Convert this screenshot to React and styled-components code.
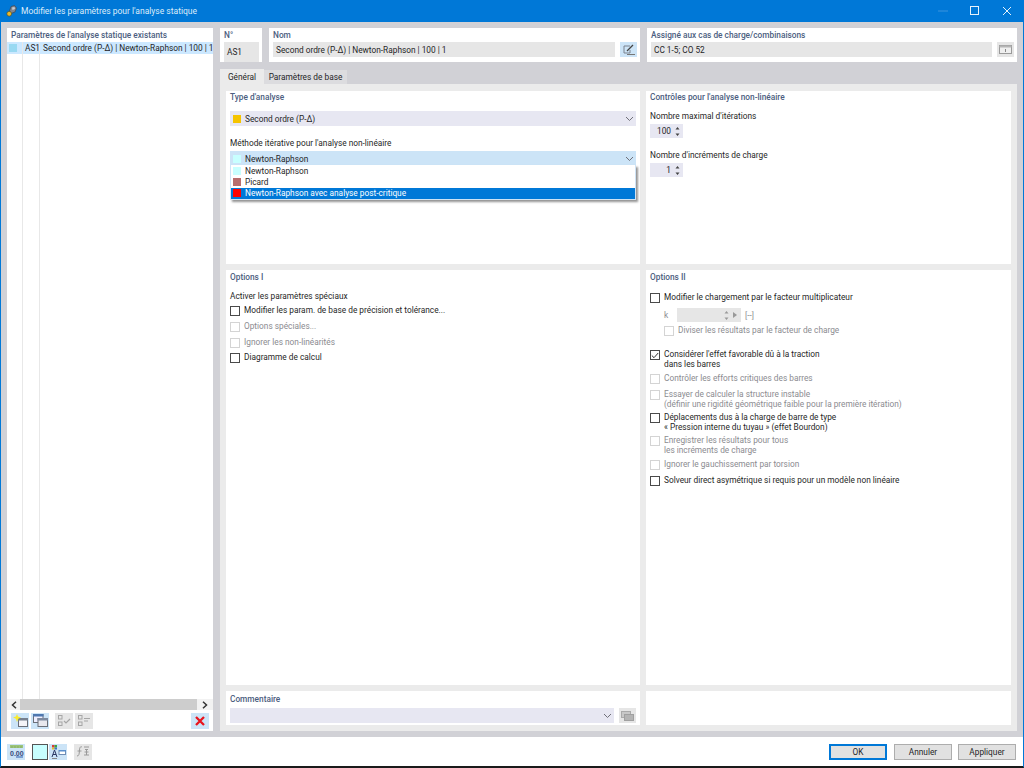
import React from "react";
import styled, { createGlobalStyle } from "styled-components";

const GlobalStyle = createGlobalStyle`
  html, body { margin: 0; padding: 0; background: #fff; }
  body { font-family: Roboto, "Open Sans", "Liberation Sans", sans-serif; font-size: 8.3px; color: #1f1f27; }
  * { box-sizing: border-box; }
`;

const Dialog = styled.div`
  width: 1024px;
  height: 768px;
  display: flex;
  flex-direction: column;
  border-left: 1px solid #0078d7;
  border-right: 1px solid #0078d7;
  border-bottom: 2px solid #1a1a1a;
  background: #fff;
  overflow: hidden;
`;
const TitleBar = styled.div`
  height: 22px;
  flex: none;
  margin: 0 -1px;
  background: #0078d7;
  color: #dcecf9;
  display: flex;
  align-items: center;
  padding-left: 6px;
  font-size: 8.5px;
  gap: 4px;
`;
const TitleText = styled.span`
  flex: 1;
`;
const WinControls = styled.div`
  display: flex;
  padding-right: 1px;
`;
const WinBtn = styled.div`
  width: 32px;
  height: 22px;
  display: flex;
  align-items: center;
  justify-content: center;
`;
const Body = styled.div`
  height: 715px;
  flex: none;
  background: #d1d1d6;
  padding: 6px;
  display: grid;
  grid-template-columns: 206px 797px;
  column-gap: 7px;
`;
const LeftPanel = styled.div`
  background: #fff;
  display: flex;
  flex-direction: column;
`;
const PanelTitle = styled.div`
  height: 14px;
  line-height: 14px;
  padding-left: 4px;
  color: #4c5e80;
  font-weight: 500;
`;
const ListArea = styled.div`
  flex: 1;
  display: grid;
  grid-template-columns: 16px 17px 1fr;
  grid-template-rows: 12px 1fr;
  overflow: hidden;
`;
const ListCell = styled.div`
  background: ${(p) => (p.$sel ? "#cce8ff" : "#fff")};
  border-right: ${(p) => (p.$line ? "1px solid #e8e8e8" : "none")};
  display: flex;
  align-items: center;
  white-space: nowrap;
  overflow: hidden;
  padding-left: ${(p) => p.$pad || 0}px;
`;
const Swatch = styled.span`
  display: inline-block;
  width: 8px;
  height: 8px;
  flex: none;
  background: ${(p) => p.$color};
`;
const ScrollBar = styled.div`
  height: 11px;
  flex: none;
  display: grid;
  grid-template-columns: 13px 1fr 16px;
  align-items: center;
  justify-items: center;
  background: #f2f2f2;
`;
const ScrollThumb = styled.div`
  width: 100%;
  height: 100%;
  background: #cdcdcd;
`;
const LeftToolbar = styled.div`
  height: 21px;
  flex: none;
  display: flex;
  align-items: center;
  padding: 0 4px;
`;
const ToolBtn = styled.div`
  width: 18px;
  height: 16px;
  flex: none;
  display: flex;
  align-items: center;
  justify-content: center;
  background: ${(p) => (p.$off ? "#e6e6e6" : "#cce4f7")};
  margin-left: ${(p) => (p.$push ? "auto" : `${p.$gap ?? 2}px`)};
`;
const RightCol = styled.div`
  display: flex;
  flex-direction: column;
  min-width: 0;
`;
const TopRow = styled.div`
  height: 34px;
  flex: none;
  display: grid;
  grid-template-columns: 42px 371px 370px;
  column-gap: 7px;
  margin-bottom: 7px;
`;
const TopCard = styled.div`
  background: #fff;
  padding: 0 3px 0 4px;
  display: flex;
  flex-direction: column;
`;
const TopLabel = styled.div`
  height: 14px;
  line-height: 14px;
  color: #4c5e80;
  font-weight: 500;
`;
const FieldRow = styled.div`
  display: flex;
  gap: 5px;
  margin-top: ${(p) => p.$top || 0}px;
`;
const ReadField = styled.div`
  flex: 1;
  height: 15px;
  background: #e6e6e6;
  display: flex;
  align-items: center;
  padding-left: 3px;
  white-space: nowrap;
  overflow: hidden;
`;
const SquareBtn = styled.div`
  width: 17px;
  height: 15px;
  flex: none;
  display: flex;
  align-items: center;
  justify-content: center;
  background: ${(p) => (p.$off ? "#e6e6e6" : "#cce4f7")};
`;
const Tabs = styled.div`
  height: 15px;
  flex: none;
  display: flex;
  align-items: flex-end;
`;
const Tab = styled.div`
  width: ${(p) => p.$width}px;
  height: ${(p) => (p.$active ? 15 : 14)}px;
  display: flex;
  align-items: center;
  justify-content: center;
  background: ${(p) => (p.$active ? "#ebebeb" : "#dcdcdf")};
`;
const TabBody = styled.div`
  flex: 1;
  background: #ebebeb;
  padding: 7px 6px 6px;
  display: grid;
  grid-template-columns: 414px 365px;
  grid-template-rows: 173px 415px 34px;
  gap: 6px;
`;
const Card = styled.div`
  background: #fff;
  padding: ${(p) => p.$top || 0}px 4px 0;
  position: relative;
`;
const CardTitle = styled.div`
  height: 13px;
  line-height: 13px;
  color: #4c5e80;
  font-weight: 500;
`;
const Label = styled.div`
  height: 12px;
  line-height: 12px;
  margin-top: ${(p) => p.$top || 0}px;
  margin-bottom: ${(p) => p.$bottom || 0}px;
`;
const Combo = styled.div`
  height: 15px;
  flex: 1;
  margin-top: ${(p) => p.$top || 0}px;
  background: ${(p) => (p.$open ? "#cce4f7" : "#e7e7f2")};
  display: flex;
  align-items: center;
  padding: 0 2px 0 3px;
  gap: 4px;
  position: relative;
`;
const ComboText = styled.span`
  flex: 1;
`;
const DropList = styled.div`
  position: absolute;
  left: 0;
  right: 0;
  top: 14px;
  background: #fff;
  border: 1px solid #cfe3f5;
  border-top: none;
  box-shadow: 2px 2px 2px rgba(60, 60, 60, 0.55);
  z-index: 5;
`;
const DropItem = styled.div`
  height: 11.4px;
  display: flex;
  align-items: center;
  gap: 4px;
  padding-left: 2px;
  background: ${(p) => (p.$hot ? "#0078d7" : "#fff")};
  color: ${(p) => (p.$hot ? "#fff" : "inherit")};
`;
const Spinner = styled.div`
  width: 33px;
  height: 14px;
  margin-top: ${(p) => p.$top || 0}px;
  background: #e7e7f2;
  display: flex;
  align-items: center;
  justify-content: flex-end;
  padding-right: 3px;
  gap: 4px;
`;
const Check = styled.div`
  display: flex;
  align-items: flex-start;
  gap: 4px;
  margin-top: ${(p) => p.$top || 0}px;
  margin-left: ${(p) => p.$indent || 0}px;
  line-height: 9.5px;
  color: ${(p) => (p.$off ? "#8b8b90" : "inherit")};
`;
const Box = styled.span`
  width: 10px;
  height: 10px;
  flex: none;
  background: #fff;
  border: 1px solid ${(p) => (p.$off ? "#d4d4d4" : "#4a4a4a")};
  display: flex;
  align-items: center;
  justify-content: center;
`;
const KRow = styled.div`
  display: flex;
  align-items: center;
  height: 14px;
  margin: 5px 0 4px 14px;
  color: #8b8b90;
`;
const KLabel = styled.span`
  width: 13px;
`;
const KField = styled.div`
  width: 64px;
  height: 14px;
  margin-right: 4px;
  background: #e6e6e6;
  display: flex;
  align-items: center;
  justify-content: flex-end;
  padding-right: 4px;
  gap: 4px;
`;
const Footer = styled.div`
  flex: 1;
  display: flex;
  align-items: center;
  padding: 0 7px 0 6px;
`;
const FootIcon = styled.div`
  width: 18px;
  height: 16px;
  margin-right: ${(p) => p.$right ?? 0}px;
  display: flex;
  align-items: center;
  justify-content: center;
  background: ${(p) => (p.$off ? "#e6e6e6" : "#cce4f7")};
`;
const ColorSquare = styled.div`
  width: 16px;
  height: 16px;
  margin: 0 1px 0 7px;
  background: #c8ffff;
  border: 1px solid #555;
`;
const FootSpacer = styled.div`
  flex: 1;
`;
const DlgButton = styled.button`
  width: 58px;
  height: 16px;
  padding: 0;
  margin-left: ${(p) => p.$gap ?? 7}px;
  font: inherit;
  color: inherit;
  background: #e1e1e1;
  border: ${(p) => (p.$primary ? "2px solid #0078d7" : "1px solid #adadad")};
`;

const Chevron = () => (
  <svg width="9" height="6" viewBox="0 0 9 6">
    <path d="M1 1l3.5 3.5L8 1" fill="none" stroke="#6f6f78" strokeWidth="1" />
  </svg>
);
const SpinArrows = ({ color = "#444" }) => (
  <svg width="5" height="11" viewBox="0 0 5 11">
    <path d="M2.5 1L4.5 3.5H.5zM2.5 10L.5 7.5h4z" fill={color} />
  </svg>
);
const ScrollArrow = ({ right }) => (
  <svg width="6" height="8" viewBox="0 0 6 8">
    <path d={right ? "M1 .8L4.5 4 1 7.2" : "M5 .8L1.5 4 5 7.2"} fill="none" stroke="#333" strokeWidth="1.5" />
  </svg>
);
const AppIcon = () => (
  <svg width="11" height="12" viewBox="0 0 11 12">
    <path d="M5 1.5L8.5.5 10.5 3 9 7 5 8.5 3.5 6z" fill="#7d8590" stroke="#3a4656" strokeWidth=".7" />
    <path d="M6 2.5L8.5 2 9 4 6.5 5z" fill="#c6ccd4" />
    <circle cx="3.2" cy="8.8" r="2.4" fill="#e8b92e" stroke="#5a4a14" strokeWidth=".6" />
  </svg>
);
const NewWindowIcon = () => (
  <svg width="15" height="13" viewBox="0 0 15 13">
    <rect x="5.5" y="4.5" width="9" height="8" fill="#f4f4f8" stroke="#6b6f78" />
    <rect x="5" y="4" width="10" height="2.5" fill="#77808e" />
    <path d="M4 0l1 2.6L8 3.5 5.4 4.8 4 8 2.9 4.8 0 3.5l2.9-.9z" fill="#f8ea30" />
  </svg>
);
const CopyIcon = () => (
  <svg width="15" height="13" viewBox="0 0 15 13">
    <rect x=".5" y=".5" width="9.5" height="8" fill="#eef" stroke="#6b6f78" />
    <rect x="0" y="0" width="10.5" height="2.5" fill="#4f78b0" />
    <rect x="5" y="4.5" width="9.5" height="8" fill="#e8e8ee" stroke="#6b6f78" />
    <rect x="4.5" y="4" width="10.5" height="2.5" fill="#7d8aa0" />
  </svg>
);
const CheckAllIcon = () => (
  <svg width="14" height="12" viewBox="0 0 14 12" fill="none" stroke="#a6a6a6">
    <rect x="1.5" y=".5" width="3.5" height="3.5" />
    <rect x="1.5" y="7" width="3.5" height="3.5" />
    <path d="M7 6l2 2 4-4" strokeWidth="1.2" />
  </svg>
);
const CheckListIcon = () => (
  <svg width="14" height="12" viewBox="0 0 14 12" fill="none" stroke="#a6a6a6">
    <rect x="1.5" y=".5" width="3.5" height="3.5" />
    <rect x="1.5" y="7" width="3.5" height="3.5" />
    <path d="M7 3.5h6M7 6h4" />
  </svg>
);
const DeleteIcon = () => (
  <svg width="10" height="10" viewBox="0 0 10 10">
    <path d="M1 1l8 8M9 1l-8 8" stroke="#e8141c" strokeWidth="2.3" />
  </svg>
);
const EditIcon = () => (
  <svg width="12" height="11" viewBox="0 0 12 11" fill="none">
    <path d="M7 2H1v7h6V6" stroke="#7a828e" />
    <path d="M4 7l6-6" stroke="#444" strokeWidth="1.2" />
    <path d="M4 10.5h8" stroke="#777" />
  </svg>
);
const TableIcon = () => (
  <svg width="13" height="9" viewBox="0 0 13 9">
    <rect x=".5" y=".5" width="12" height="8" fill="#efefef" stroke="#9a9a9a" />
    <rect x=".5" y=".5" width="12" height="2" fill="#b5b5b5" />
    <path d="M6.5 4v3" stroke="#888" />
  </svg>
);
const CommentIcon = () => (
  <svg width="13" height="10" viewBox="0 0 13 10">
    <rect x=".5" y=".5" width="9" height="6" fill="#c8c8c8" stroke="#aaa" />
    <rect x="3.5" y="3.5" width="9" height="6" fill="#b4b4b4" stroke="#a0a0a0" />
  </svg>
);
const NumbersIcon = () => (
  <svg width="15" height="13" viewBox="0 0 15 13">
    <rect x="1" y="0" width="13" height="3" fill="#9cc47a" />
    <path d="M3 1.5v1M6 1.5v1M9 1.5v1M12 1.5v1" stroke="#6f9a4c" />
    <text x="1" y="10.5" fontSize="7" fontWeight="700" fill="#34487c" fontFamily="Liberation Sans">0.00</text>
    <path d="M7 12h7" stroke="#2d5fb0" />
  </svg>
);
const ModelIcon = () => (
  <svg width="15" height="14" viewBox="0 0 15 14">
    <rect x="1" y="0" width="2.5" height="2.5" fill="#d83b3b" />
    <rect x="3.5" y="0" width="2.5" height="2.5" fill="#3fa53f" />
    <rect x="1" y="2.5" width="2.5" height="2" fill="#e6c02e" />
    <rect x="3.5" y="2.5" width="2.5" height="2" fill="#3b78c0" />
    <path d="M1 12L3.5 5 6 12M2 9.5h3" fill="none" stroke="#2a3560" />
    <path d="M1 13.5h5" stroke="#888" />
    <rect x="8" y="5.5" width="6.5" height="4" fill="#fff" stroke="#6f8cb4" />
    <rect x="8" y="5" width="7" height="1.5" fill="#5a8fce" />
  </svg>
);
const FormulaIcon = () => (
  <svg width="14" height="13" viewBox="0 0 14 13" fill="none" stroke="#9a9a9a">
    <path d="M6 2C4 1 3.6 3 3.4 6S3 11 1 11M1.5 6h4" />
    <path d="M8 2h5M9 4.5h3M8.5 7l4 0M8 10h5M10.5 4.5V10" />
  </svg>
);

function CheckRow({ label, off, checked, top, indent }) {
  return (
    <Check $off={off} $top={top} $indent={indent}>
      <Box $off={off}>
        {checked && (
          <svg width="8" height="7" viewBox="0 0 8 7">
            <path d="M.8 3.5l2.2 2.2L7.2 1" fill="none" stroke="#333" strokeWidth="1" />
          </svg>
        )}
      </Box>
      <span>{label}</span>
    </Check>
  );
}

export default function App() {
  return (
    <Dialog>
      <GlobalStyle />
      <TitleBar>
        <AppIcon />
        <TitleText>Modifier les paramètres pour l'analyse statique</TitleText>
        <WinControls>
          <WinBtn>
            <svg width="10" height="2" viewBox="0 0 10 2"><path d="M0 1h10" stroke="#3a93dd" /></svg>
          </WinBtn>
          <WinBtn>
            <svg width="10" height="10" viewBox="0 0 10 10"><rect x=".5" y=".5" width="8" height="8" fill="none" stroke="#e6f2fb" /></svg>
          </WinBtn>
          <WinBtn>
            <svg width="10" height="10" viewBox="0 0 10 10"><path d="M1 1l8 8M9 1l-8 8" stroke="#e6f2fb" /></svg>
          </WinBtn>
        </WinControls>
      </TitleBar>
      <Body>
        <LeftPanel>
          <PanelTitle>Paramètres de l'analyse statique existants</PanelTitle>
          <ListArea>
            <ListCell $sel $line $pad={2}><Swatch $color="#99d9f2" /></ListCell>
            <ListCell $sel $line $pad={2}>AS1</ListCell>
            <ListCell $sel $pad={3}>Second ordre (P-Δ) | Newton-Raphson | 100 | 1</ListCell>
            <ListCell $line />
            <ListCell $line />
            <ListCell />
          </ListArea>
          <ScrollBar>
            <ScrollArrow />
            <ScrollThumb />
            <ScrollArrow right />
          </ScrollBar>
          <LeftToolbar>
            <ToolBtn $gap={0}><NewWindowIcon /></ToolBtn>
            <ToolBtn><CopyIcon /></ToolBtn>
            <ToolBtn $off $gap={6}><CheckAllIcon /></ToolBtn>
            <ToolBtn $off><CheckListIcon /></ToolBtn>
            <ToolBtn $push><DeleteIcon /></ToolBtn>
          </LeftToolbar>
        </LeftPanel>
        <RightCol>
          <TopRow>
            <TopCard>
              <TopLabel>N°</TopLabel>
              <ReadField>AS1</ReadField>
            </TopCard>
            <TopCard>
              <TopLabel>Nom</TopLabel>
              <FieldRow>
                <ReadField>Second ordre (P-Δ) | Newton-Raphson | 100 | 1</ReadField>
                <SquareBtn><EditIcon /></SquareBtn>
              </FieldRow>
            </TopCard>
            <TopCard>
              <TopLabel>Assigné aux cas de charge/combinaisons</TopLabel>
              <FieldRow>
                <ReadField>CC 1-5; CO 52</ReadField>
                <SquareBtn $off><TableIcon /></SquareBtn>
              </FieldRow>
            </TopCard>
          </TopRow>
          <Tabs>
            <Tab $active $width={44}>Général</Tab>
            <Tab $width={83}>Paramètres de base</Tab>
          </Tabs>
          <TabBody>
            <Card>
              <CardTitle>Type d'analyse</CardTitle>
              <Combo $top={7}>
                <Swatch $color="#f5c400" />
                <ComboText>Second ordre (P-Δ)</ComboText>
                <Chevron />
              </Combo>
              <Label $top={11} $bottom={2}>Méthode itérative pour l'analyse non-linéaire</Label>
              <Combo $open>
                <Swatch $color="#c8ffff" />
                <ComboText>Newton-Raphson</ComboText>
                <Chevron />
                <DropList>
                  <DropItem><Swatch $color="#c8ffff" />Newton-Raphson</DropItem>
                  <DropItem><Swatch $color="#b76e6e" />Picard</DropItem>
                  <DropItem $hot><Swatch $color="#ff0000" />Newton-Raphson avec analyse post-critique</DropItem>
                </DropList>
              </Combo>
            </Card>
            <Card>
              <CardTitle>Contrôles pour l'analyse non-linéaire</CardTitle>
              <Label $top={6}>Nombre maximal d'itérations</Label>
              <Spinner $top={2}>100<SpinArrows /></Spinner>
              <Label $top={11}>Nombre d'incréments de charge</Label>
              <Spinner $top={2}>1<SpinArrows /></Spinner>
            </Card>
            <Card $top={1}>
              <CardTitle>Options I</CardTitle>
              <Label $top={6} $bottom={4}>Activer les paramètres spéciaux</Label>
              <CheckRow label="Modifier les param. de base de précision et tolérance..." />
              <CheckRow off top={6} label="Options spéciales..." />
              <CheckRow off top={5.5} label="Ignorer les non-linéarités" />
              <CheckRow top={5.5} label="Diagramme de calcul" />
            </Card>
            <Card $top={1}>
              <CardTitle>Options II</CardTitle>
              <CheckRow top={9} label="Modifier le chargement par le facteur multiplicateur" />
              <KRow>
                <KLabel>k</KLabel>
                <KField>
                  <SpinArrows color="#999" />
                  <svg width="4" height="6" viewBox="0 0 4 6"><path d="M0 0l4 3-4 3z" fill="#999" /></svg>
                </KField>
                [--]
              </KRow>
              <CheckRow off indent={14} label="Diviser les résultats par le facteur de charge" />
              <CheckRow checked top={14} label={<>Considérer l'effet favorable dû à la traction<br />dans les barres</>} />
              <CheckRow off top={5} label="Contrôler les efforts critiques des barres" />
              <CheckRow off top={6} label={<>Essayer de calculer la structure instable<br />(définir une rigidité géométrique faible pour la première itération)</>} />
              <CheckRow top={4} label={<>Déplacements dus à la charge de barre de type<br />« Pression interne du tuyau » (effet Bourdon)</>} />
              <CheckRow off top={4} label={<>Enregistrer les résultats pour tous<br />les incréments de charge</>} />
              <CheckRow off top={5} label="Ignorer le gauchissement par torsion" />
              <CheckRow top={6} label="Solveur direct asymétrique si requis pour un modèle non linéaire" />
            </Card>
            <Card $top={2}>
              <CardTitle>Commentaire</CardTitle>
              <FieldRow $top={2}>
                <Combo>
                  <ComboText />
                  <Chevron />
                </Combo>
                <SquareBtn $off><CommentIcon /></SquareBtn>
              </FieldRow>
            </Card>
            <Card />
          </TabBody>
        </RightCol>
      </Body>
      <Footer>
        <FootIcon><NumbersIcon /></FootIcon>
        <ColorSquare />
        <FootIcon $right={7}><ModelIcon /></FootIcon>
        <FootIcon $off><FormulaIcon /></FootIcon>
        <FootSpacer />
        <DlgButton $primary>OK</DlgButton>
        <DlgButton>Annuler</DlgButton>
        <DlgButton $gap={6}>Appliquer</DlgButton>
      </Footer>
    </Dialog>
  );
}
